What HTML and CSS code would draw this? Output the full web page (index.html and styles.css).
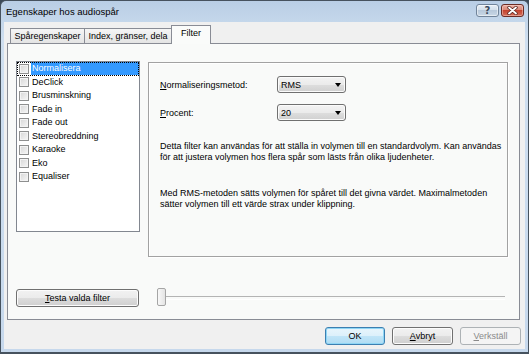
FILE: index.html
```html
<!DOCTYPE html>
<html>
<head>
  <title>Egenskaper hos audiospår</title>
  <link rel="stylesheet" href="styles.css">
</head>
<body>
  <div class="window">
    <div class="titlebar">
      <span class="title">Egenskaper hos audiospår</span>
      <div class="caption-btns">
        <span class="cap-btn help">?</span>
        <span class="cap-btn close">
          <svg width="11" height="9" viewBox="0 0 11 9">
            <path d="M2 1.5 L9 7.5 M9 1.5 L2 7.5" stroke="#5b2620" stroke-width="3.4" stroke-linecap="round"/>
            <path d="M2 1.5 L9 7.5 M9 1.5 L2 7.5" stroke="#fff" stroke-width="1.8" stroke-linecap="round"/>
          </svg>
        </span>
      </div>
    </div>

    <div class="client">
      <div class="tabs">
        <div class="tab first">Spåregenskaper</div>
        <div class="tab second">Index, gränser, dela</div>
        <div class="tab active">Filter</div>
      </div>

      <div class="panel">
        <div class="panel-top">
          <ul class="filter-list">
            <li class="selected"><span class="check"></span><span class="label">Normalisera</span></li>
            <li><span class="check"></span><span class="label">DeClick</span></li>
            <li><span class="check"></span><span class="label">Brusminskning</span></li>
            <li><span class="check"></span><span class="label">Fade in</span></li>
            <li><span class="check"></span><span class="label">Fade out</span></li>
            <li><span class="check"></span><span class="label">Stereobreddning</span></li>
            <li><span class="check"></span><span class="label">Karaoke</span></li>
            <li><span class="check"></span><span class="label">Eko</span></li>
            <li><span class="check"></span><span class="label">Equaliser</span></li>
          </ul>

          <div class="group">
            <div class="field">
              <label><u>N</u>ormaliseringsmetod:</label>
              <div class="combo"><span>RMS</span><span class="arrow"></span></div>
            </div>
            <div class="field">
              <label><u>P</u>rocent:</label>
              <div class="combo"><span>20</span><span class="arrow"></span></div>
            </div>
            <p class="info">Detta filter kan användas för att ställa in volymen till en standardvolym. Kan användas<br>för att justera volymen hos flera spår som lästs från olika ljudenheter.</p>
            <p class="info second-info">Med RMS-metoden sätts volymen för spåret till det givna värdet. Maximalmetoden<br>sätter volymen till ett värde strax under klippning.</p>
          </div>
        </div>

        <div class="panel-bottom">
          <button class="btn test"><u>T</u>esta valda filter</button>
          <div class="slider"><span class="thumb"></span></div>
        </div>
      </div>

      <div class="dialog-buttons">
        <button class="btn default">OK</button>
        <button class="btn"><u>A</u>vbryt</button>
        <button class="btn" disabled><u>V</u>erkställ</button>
      </div>
    </div>
  </div>
</body>
</html>
```

FILE: styles.css
```css
* {
  box-sizing: border-box;
}

body {
  margin: 0;
  background: #3c4a58;
  font-family: "Liberation Sans", Arial, sans-serif;
  font-size: 9px;
  color: #000;
}

/* Window frame */
.window {
  width: 529px;
  height: 354px;
  display: flex;
  flex-direction: column;
  border: 1px solid #46525e;
  border-bottom-width: 2px;
  border-radius: 6px 6px 0 0;
  padding: 0 3px 3px;
  background: linear-gradient(#b9cee5, #cfdff0 40px, #c6d8ec);
  overflow: hidden;
}

.titlebar {
  height: 21px;
  flex: 0 0 21px;
  display: flex;
  align-items: center;
  justify-content: space-between;
  padding: 0 1px 0 2px;
}

.title {
  font-size: 9.5px;
}

.caption-btns {
  display: flex;
  gap: 2px;
  align-self: flex-start;
  margin-top: 3px;
}

.cap-btn {
  width: 23px;
  height: 13px;
  border-radius: 3px;
  display: flex;
  align-items: center;
  justify-content: center;
}

.cap-btn.help {
  border: 1px solid #71849a;
  background: linear-gradient(#e7eef6, #d2dee9 50%, #b8c9db 50%, #c9d7e6);
  color: #3b4a5b;
  font-family: "DejaVu Sans", sans-serif;
  font-size: 10px;
  font-weight: bold;
  box-shadow: inset 0 0 0 1px rgba(255,255,255,0.5);
}

.cap-btn.close {
  border: 1px solid #6b2b24;
  background: linear-gradient(#e9ada1, #d88473 50%, #c5432f 50%, #d36e5a);
  box-shadow: inset 0 0 0 1px rgba(255,220,210,0.45);
}

/* Client area */
.client {
  flex: 1;
  background: #f0f0f0;
  padding: 3px 4px 4px 3px;
  display: flex;
  flex-direction: column;
}

/* Tabs */
.tabs {
  display: flex;
  align-items: flex-end;
  height: 19px;
  padding-left: 3px;
  margin-bottom: -1px;
  position: relative;
  z-index: 1;
}

.tab {
  height: 15px;
  margin-bottom: 1px;
  border: 1px solid #898c95;
  border-bottom: none;
  background: linear-gradient(#f5f5f5, #e4e4e4);
  text-align: center;
  line-height: 14px;
  white-space: nowrap;
}

.tab.first { width: 75px; }
.tab.second { width: 88px; margin-left: -1px; }

.tab.active {
  width: 40px;
  height: 19px;
  margin-bottom: 0;
  margin-left: -1px;
  background: #fafbfa;
  line-height: 15px;
}

/* Tab panel */
.panel {
  flex: 0 0 277px;
  margin-right: 1px;
  border: 1px solid #898c95;
  background: #f9faf9;
  padding: 17px 10px 11px 8px;
  display: flex;
  flex-direction: column;
}

.panel-top {
  display: flex;
  gap: 8px;
  align-items: flex-start;
}

/* Filter list */
.filter-list {
  list-style: none;
  margin: 0;
  padding: 0;
  width: 124px;
  height: 171px;
  border: 1px solid #828790;
  background: #fff;
}

.filter-list li {
  display: flex;
  align-items: center;
  height: 13.5px;
}

.filter-list li.selected {
  outline: 1px dotted #000;
  outline-offset: -1px;
}

.check {
  width: 10px;
  height: 10px;
  margin-left: 2px;
  border: 1px solid #8e8f8f;
  background: linear-gradient(135deg, #d6d6d6, #f7f7f7);
  box-shadow: inset 0 0 0 1px #f3f3f3;
}

.label {
  flex: 1;
  margin-left: 2px;
  padding-left: 1px;
  line-height: 13px;
  white-space: nowrap;
}

.selected .label {
  background: #3399ff;
  color: #fff;
}

/* Settings group */
.group {
  width: 360px;
  height: 195px;
  margin-top: 1px;
  border: 1px solid #a2a2a2;
  box-shadow: inset 1px 1px 0 #fff, 1px 1px 0 #fff;
  padding: 13px 11px 0 11px;
}

.field {
  display: flex;
  align-items: center;
  height: 17px;
}

.field + .field {
  margin-top: 11px;
}

.field label {
  width: 117px;
}

.combo {
  width: 69px;
  height: 17px;
  display: flex;
  align-items: center;
  justify-content: space-between;
  padding: 0 4px 0 3px;
  border: 1px solid #707070;
  border-radius: 3px;
  background: linear-gradient(#f3f3f3, #ebebeb 50%, #dedede 50%, #d0d0d0);
  box-shadow: inset 0 0 0 1px #fbfbfb;
}

.arrow {
  width: 0;
  height: 0;
  border-left: 3px solid transparent;
  border-right: 3px solid transparent;
  border-top: 4px solid #000;
}

.info {
  margin: 20px 0 0;
  line-height: 11px;
  white-space: nowrap;
}

.info.second-info {
  margin-top: 25px;
}

/* Bottom of the panel */
.panel-bottom {
  display: flex;
  align-items: center;
  margin-top: 32px;
}

.btn {
  height: 18px;
  padding: 0;
  border: 1px solid #707070;
  border-radius: 3px;
  background: linear-gradient(#f2f2f2, #ebebeb 50%, #dddddd 50%, #cfcfcf);
  box-shadow: inset 0 0 0 1px #fcfcfc;
  font: inherit;
  color: #000;
}

.btn.test {
  width: 123px;
}

.slider {
  position: relative;
  width: 348px;
  height: 18px;
  margin-left: 18px;
}

.slider::before {
  content: '';
  position: absolute;
  left: 0;
  right: 0;
  top: 7px;
  height: 2px;
  border-top: 1px solid #b4b4b4;
  border-bottom: 1px solid #fff;
}

.thumb {
  position: absolute;
  left: 0;
  top: -1px;
  width: 9px;
  height: 18px;
  border: 1px solid #a5a5a5;
  border-radius: 2px;
  background: linear-gradient(90deg, #f8f8f8, #e4e4e4);
}

/* Dialog buttons */
.dialog-buttons {
  display: flex;
  justify-content: flex-end;
  gap: 7px;
  margin-top: 7px;
}

.dialog-buttons .btn {
  width: 61px;
}

.dialog-buttons .btn.default {
  width: 60px;
  border-color: #3c7fb1;
  background: linear-gradient(#e8f5fc, #dcf0fb 50%, #c1e5f8 50%, #b0dcf3);
  box-shadow: inset 0 0 0 1px #8fd6f5;
}

.btn:disabled {
  border-color: #adb2b5;
  background: #f4f4f4;
  box-shadow: none;
  color: #8a8a8a;
}
```
